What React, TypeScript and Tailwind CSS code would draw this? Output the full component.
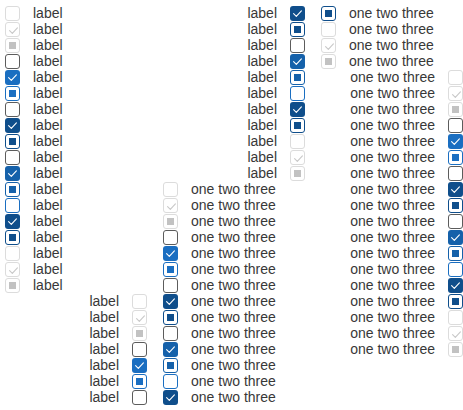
import React from 'react';

type BoxState = {
    kind: 'unchecked' | 'checked' | 'indeterminate';
    tone: 'disabled' | 'normal' | 'bright' | 'medium' | 'dark' | 'focus';
};

// the 18 states each group runs through, top to bottom
const states: BoxState[] = [
    { kind: 'unchecked', tone: 'disabled' },
    { kind: 'checked', tone: 'disabled' },
    { kind: 'indeterminate', tone: 'disabled' },
    { kind: 'unchecked', tone: 'normal' },
    { kind: 'checked', tone: 'bright' },
    { kind: 'indeterminate', tone: 'bright' },
    { kind: 'unchecked', tone: 'normal' },
    { kind: 'checked', tone: 'dark' },
    { kind: 'indeterminate', tone: 'dark' },
    { kind: 'unchecked', tone: 'normal' },
    { kind: 'checked', tone: 'medium' },
    { kind: 'indeterminate', tone: 'medium' },
    { kind: 'unchecked', tone: 'focus' },
    { kind: 'checked', tone: 'dark' },
    { kind: 'indeterminate', tone: 'dark' },
    { kind: 'unchecked', tone: 'disabled' },
    { kind: 'checked', tone: 'disabled' },
    { kind: 'indeterminate', tone: 'disabled' },
];

const CheckMark = ({ color }: { color: string }) => (
    <svg width="15" height="15" viewBox="0 0 15 15" className="absolute left-0 top-0">
        <path d="M3.6 7.7 L6.3 10.3 L11.4 4.8" fill="none" stroke={color} strokeWidth="1.1" strokeLinecap="round" strokeLinejoin="round" />
    </svg>
);

const Box = ({ state }: { state: BoxState }) => {
    const { kind, tone } = state;

    if (tone === 'disabled') {
        return (
            <span className="relative flex items-center justify-center w-[15px] h-[15px] shrink-0 rounded-[3px] border border-[#dcdcdc] bg-white">
                {kind === 'checked' && <CheckMark color="#c8c8c8" />}
                {kind === 'indeterminate' && <span className="block w-[7px] h-[7px] bg-[#c2c2c2]"></span>}
            </span>
        );
    }

    if (kind === 'unchecked') {
        return (
            <span
                className={
                    tone === 'focus'
                        ? 'block w-[15px] h-[15px] shrink-0 rounded-[3px] border-[1.5px] border-[#1a6ec1] bg-white'
                        : 'block w-[15px] h-[15px] shrink-0 rounded-[3px] border-[1.5px] border-[#5c5c5c] bg-white'
                }
            ></span>
        );
    }

    const fill =
        tone === 'bright' ? 'bg-[#1a6ec1]' : tone === 'medium' ? 'bg-[#1561aa]' : 'bg-[#0f4e8b]';
    const border =
        tone === 'bright' ? 'border-[#1a6ec1]' : tone === 'medium' ? 'border-[#1561aa]' : 'border-[#0f4e8b]';

    if (kind === 'checked') {
        return (
            <span className={`relative block w-[15px] h-[15px] shrink-0 rounded-[3px] ${fill}`}>
                <CheckMark color="#ffffff" />
            </span>
        );
    }

    return (
        <span className={`flex items-center justify-center w-[15px] h-[15px] shrink-0 rounded-[3px] border-[1.5px] bg-white ${border}`}>
            <span className={`block w-[7px] h-[7px] ${fill}`}></span>
        </span>
    );
};

const Row = ({ state, text, side }: { state: BoxState; text: string; side: 'left' | 'right' }) =>
    side === 'left' ? (
        <div className="flex h-4 items-center gap-[13px]">
            <Box state={state} />
            <span className="leading-4 whitespace-nowrap">{text}</span>
        </div>
    ) : (
        <div className="flex h-4 items-center justify-end gap-[13px]">
            <span className="leading-4 whitespace-nowrap">{text}</span>
            <Box state={state} />
        </div>
    );

const Group = ({ from, to, text, side }: { from: number; to: number; text: string; side: 'left' | 'right' }) => (
    <>
        {states.slice(from, to).map((s, i) => (
            <Row key={i} state={s} text={text} side={side} />
        ))}
    </>
);

const App: React.FC = () => {
    return (
        <div className="w-[463px] h-[410px] overflow-hidden bg-white text-[14px] text-[#383838] font-['Liberation_Sans',Arial,sans-serif]">
            <div className="grid grid-cols-[142px_142px_142px] gap-x-4 pl-[5px] pt-[5px]">
                <div className="flex flex-col">
                    <Group from={0} to={18} text="label" side="left" />
                    <Group from={0} to={7} text="label" side="right" />
                </div>
                <div className="flex flex-col">
                    <Group from={7} to={18} text="label" side="right" />
                    <Group from={0} to={14} text="one two three" side="left" />
                </div>
                <div className="flex flex-col">
                    <Group from={14} to={18} text="one two three" side="left" />
                    <Group from={0} to={18} text="one two three" side="right" />
                </div>
            </div>
        </div>
    );
};

export default App;
